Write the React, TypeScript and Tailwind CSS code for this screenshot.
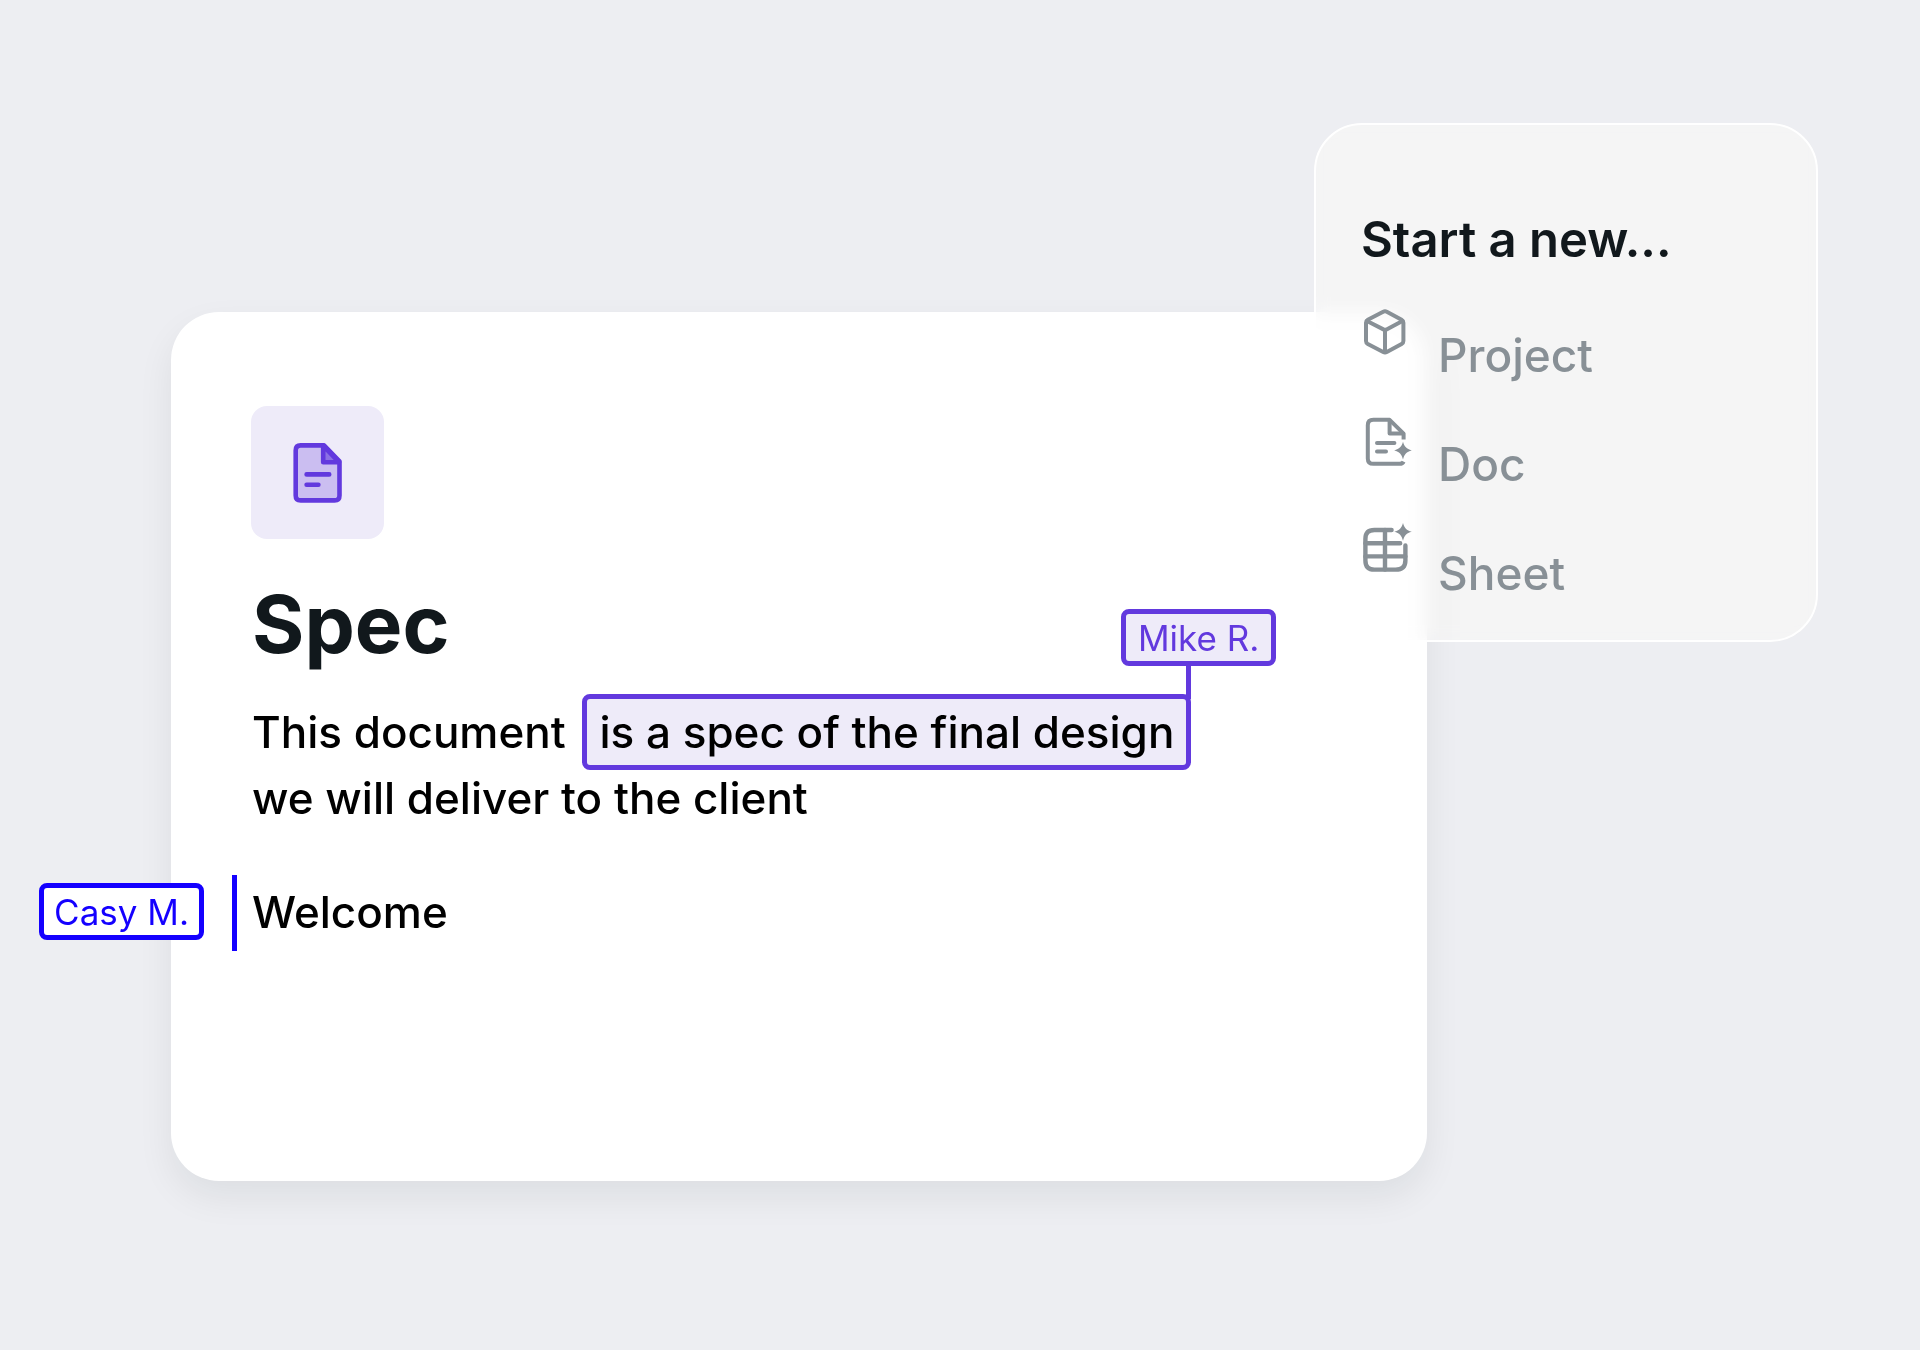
const MENU_ITEMS = [
  { label: "Project", Icon: CubeIcon },
  { label: "Doc", Icon: DocSparkleIcon },
  { label: "Sheet", Icon: SheetSparkleIcon },
];

function CubeIcon() {
  return (
    <svg viewBox="0 0 56 56" className="size-14" fill="none" stroke="currentColor" strokeWidth="4" strokeLinejoin="round" strokeLinecap="round">
      <path d="M26.2 6.7 10.8 14.8Q9 15.8 9 17.8V36Q9 38 10.8 39L26.2 47Q28 47.9 29.8 47L44.6 39Q46.4 38 46.4 36V17.8Q46.4 15.8 44.6 14.8L29.8 6.7Q28 5.8 26.2 6.7Z" />
      <path d="M10 16 26.4 24.4Q28 25.2 29.6 24.4L45.4 16M28 25.6V47" />
    </svg>
  );
}

function DocSparkleIcon() {
  return (
    <svg viewBox="-1 -1 56 56" className="size-14" fill="none" stroke="currentColor" strokeWidth="4" strokeLinejoin="round">
      <path d="M45.6 46.6Q44.6 48.8 41.6 48.8H15.4Q9.8 48.8 9.8 43.4V10.2Q9.8 4.8 15.4 4.8H31.6L45.6 18.6V24.4" />
      <path d="M31.6 5.4V18.4H44.8" />
      <path d="M19 28H36.4M19 36.4H28" strokeLinecap="round" />
      <path d="M45 26.8C46.4 31.6 48.4 34 53.8 35.4C48.4 36.8 46.4 39.2 45 44.4C43.6 39.2 41.6 36.8 36.2 35.4C41.6 34 43.6 31.6 45 26.8Z" fill="currentColor" stroke="none" />
    </svg>
  );
}

function SheetSparkleIcon() {
  return (
    <svg viewBox="-1 -1 56 56" className="size-14" fill="none" stroke="currentColor" strokeWidth="4.4" strokeLinecap="round">
      <path d="M33.6 6H16.4Q7.4 6 7.4 15V36.4Q7.4 45.6 16.4 45.6H37.6Q47.4 45.6 47.4 36.4V21.4" />
      <path d="M27 6V45.6M7.4 19.2H42.2M7.4 32.4H47.4" />
      <path d="M45 -1C46.4 3.8 48.4 6.4 53.8 7.8C48.4 9.2 46.4 11.6 45 16.8C43.6 11.6 41.6 9.2 36.2 7.8C41.6 6.4 43.6 3.8 45 -1Z" fill="currentColor" stroke="none" />
    </svg>
  );
}

function DocIcon() {
  return (
    <svg viewBox="0 0 52 64" className="h-16" fill="none" stroke="#6239de" strokeWidth="4.6" strokeLinejoin="round">
      <path d="M32 4.4H8.6Q3.7 4.4 3.7 9.4V54.4Q3.7 59.4 8.6 59.4H42.6Q47.5 59.4 47.5 54.4V20.4L32 4.4Z" fill="#cbbef1" />
      <path d="M31.2 4.6V21.2H47Z" fill="#8c70e4" />
      <path d="M14.6 33.4H37.2M14.6 43.8H26.4" strokeLinecap="round" />
    </svg>
  );
}

const StartMenu = () => {
  return (
    <nav className="absolute top-[123px] right-[102px] w-[504px] rounded-[48px] border-2 border-white bg-white/40 px-[45px] pt-[85px] pb-2.5 backdrop-blur-[10px] backdrop-grayscale">
      <h2 className="text-[49px] leading-[60px] font-semibold text-[#11181c]">Start a new...</h2>
      <ul className="mt-[33px]">
        {MENU_ITEMS.map(({ label, Icon }) => (
          <li key={label} className="h-[109px]">
            <a href="#" className="-ml-1 flex items-start gap-[25px] pt-0.5 text-[#889096]">
              <Icon />
              <span className="pt-[22px] text-[46px] leading-[56px] font-medium">{label}</span>
            </a>
          </li>
        ))}
      </ul>
    </nav>
  );
};

export default function App() {
  return (
    <main className="relative min-h-screen bg-[#edeef2] pt-[312px] pr-[493px] pb-[169px] pl-[171px] font-['Inter',sans-serif]">
      <article className="min-h-[869px] rounded-[48px] bg-white px-20 pt-[94px] shadow-[0_16px_36px_rgba(17,24,28,0.07)]">
        <div className="flex size-[133px] items-center justify-center rounded-2xl bg-[#eeebf9]">
          <DocIcon />
        </div>
        <h1 className="mt-9 pl-px text-[80px] leading-[98px] font-bold text-[#11181c]">Spec</h1>
        <p className="mt-[26px] pl-px text-[44px] leading-[66px] font-medium text-black">
          This document{" "}
          <mark className="relative ml-[5px] rounded-lg border-5 border-[#6239de] bg-[#eeebf9] px-3 py-1.5 text-black">
            is a spec of the final design
            <span className="absolute -right-[5px] bottom-full h-9 w-[5px] bg-[#6239de]" />
            <span className="absolute -right-[90px] bottom-[99px] rounded-lg border-5 border-[#6239de] bg-[#eeebf9] px-3 pt-px text-[35px] leading-[46px] font-normal whitespace-nowrap text-[#6239de]">
              Mike R.
            </span>
          </mark>
          <br />
          we will deliver to the client
        </p>
        <p className="relative mt-12 pl-px text-[44px] leading-[66px] font-medium text-black">
          <span className="absolute top-1 right-full mr-[47px] rounded-lg border-5 border-[#1400ff] bg-white px-2.5 pt-px text-[35px] leading-[46px] font-normal whitespace-nowrap text-[#1400ff]">
            Casy M.
          </span>
          <span className="absolute -top-1 right-full mr-[14px] h-[76px] w-[5px] bg-[#1400ff]" />
          Welcome
        </p>
      </article>
      <StartMenu />
    </main>
  );
}
